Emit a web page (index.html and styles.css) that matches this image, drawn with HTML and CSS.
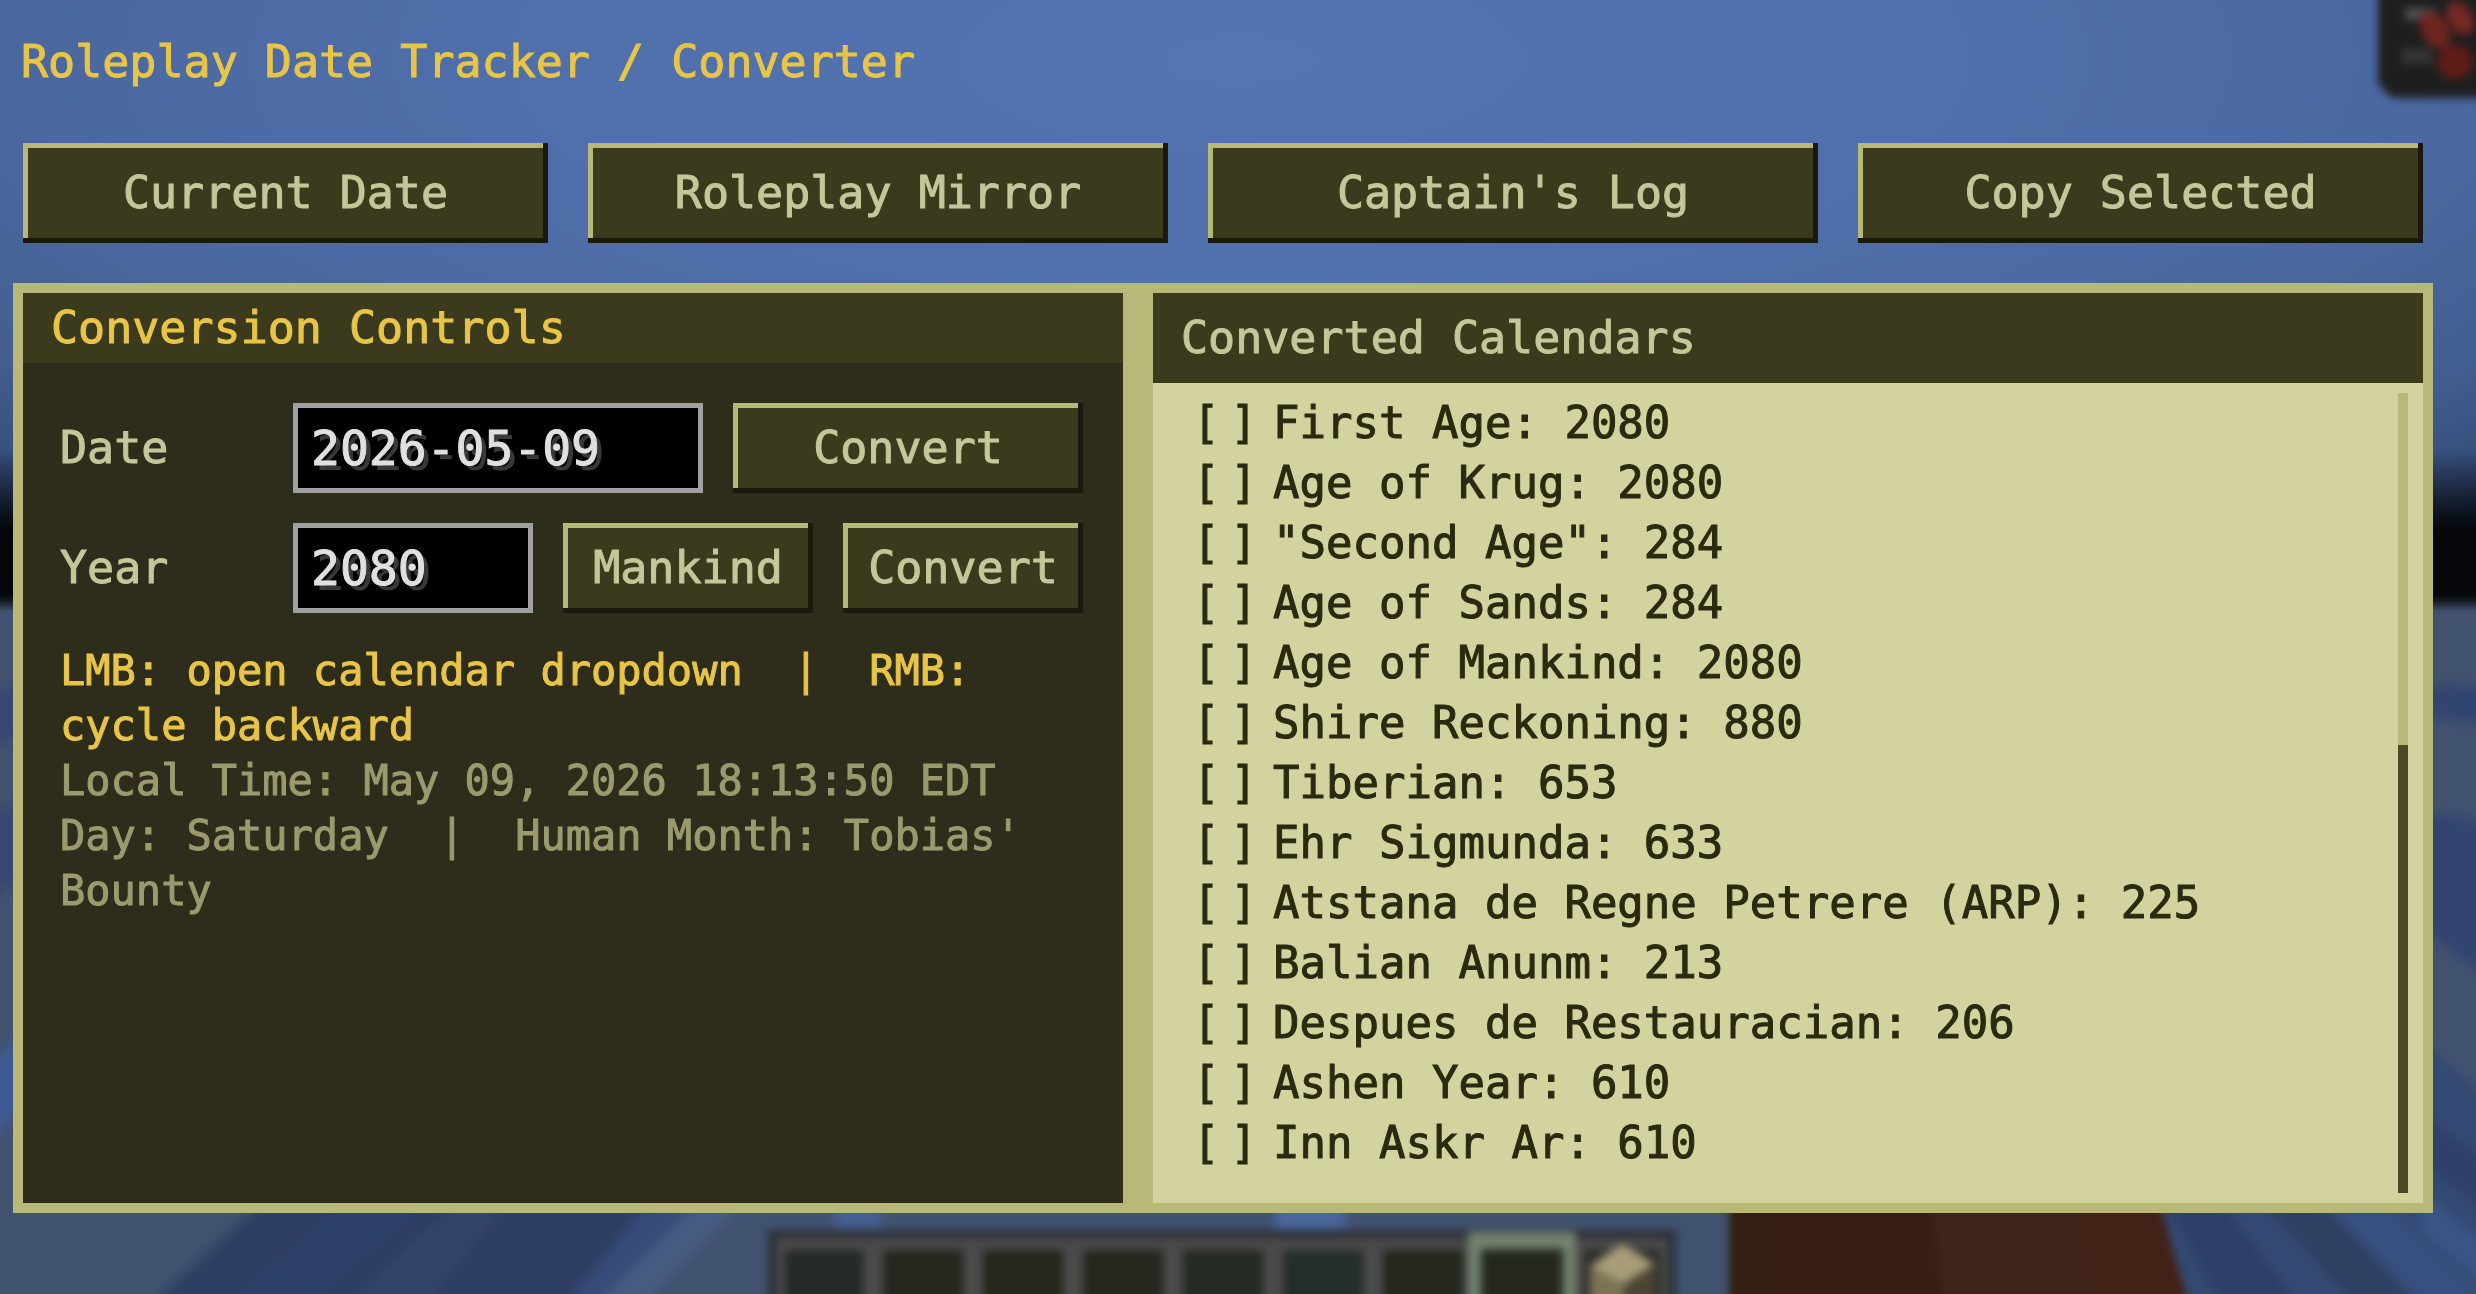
FILE: index.html
```html
<!DOCTYPE html>
<html lang="en">
<head>
    <meta charset="UTF-8">
    <meta name="viewport" content="width=device-width, initial-scale=1.0">
    <title>Roleplay Date Tracker / Converter</title>
    <link rel="stylesheet" href="styles.css">
</head>
<body>

<!-- Game world behind the screen -->
<svg class="world" viewBox="0 0 2476 1294" preserveAspectRatio="none" aria-hidden="true">
    <defs>
        <radialGradient id="sky" gradientUnits="userSpaceOnUse" cx="0" cy="0" r="1" gradientTransform="translate(1240 60) scale(1900 640)">
            <stop offset="0" stop-color="#5474b2"/>
            <stop offset="0.35" stop-color="#5070ac"/>
            <stop offset="0.65" stop-color="#4a689f"/>
            <stop offset="0.8" stop-color="#425e90"/>
            <stop offset="1" stop-color="#2c3f66"/>
        </radialGradient>
        <linearGradient id="horizon" x1="0" y1="0" x2="0" y2="1">
            <stop offset="0" stop-color="#04060a" stop-opacity="0"/>
            <stop offset="0.3" stop-color="#04060a" stop-opacity="0.6"/>
            <stop offset="0.5" stop-color="#04060a"/>
            <stop offset="1" stop-color="#04060a"/>
        </linearGradient>
        <filter id="soft" x="-10%" y="-10%" width="120%" height="120%" color-interpolation-filters="sRGB">
            <feGaussianBlur stdDeviation="6"/>
        </filter>
        <filter id="softer" x="-10%" y="-10%" width="120%" height="120%" color-interpolation-filters="sRGB">
            <feGaussianBlur stdDeviation="4"/>
        </filter>
    </defs>

    <rect width="2476" height="620" fill="url(#sky)"/>
    <rect y="450" width="2476" height="160" fill="url(#horizon)"/>

    <!-- Floor -->
    <g filter="url(#soft)">
        <rect x="-40" y="604" width="2556" height="760" fill="#41526f"/>
        <polygon points="-40,700 40,680 40,730 -40,760" fill="#364871"/>
        <polygon points="-40,830 40,790 40,860 -40,930" fill="#364871"/>
        <polygon points="-40,1100 60,990 60,1060 -40,1180" fill="#3d5a94"/>
        <polygon points="265,1200 700,1200 575,1310 145,1310" fill="#2e3e62"/>
        <polygon points="350,1200 430,1200 300,1310 220,1310" fill="#2d4069"/>
        <polygon points="460,1200 510,1200 420,1310 340,1310" fill="#33456a"/>
        <polygon points="650,1200 700,1200 590,1310 560,1310" fill="#364b7a"/>
        <polygon points="700,1200 745,1200 640,1310 590,1310" fill="#465b80"/>
        <rect x="835" y="1190" width="46" height="50" fill="#465f90"/>
        <rect x="1275" y="1190" width="70" height="50" fill="#4a669c"/>
        <polygon points="2380,680 2520,690 2520,730 2380,710" fill="#324570"/>
        <polygon points="2380,800 2520,830 2520,1000 2380,900" fill="#324570"/>
        <polygon points="2150,1190 2380,1000 2520,1130 2520,1320 2180,1320" fill="#344973"/>
        <polygon points="2165,1200 2220,1200 2310,1320 2230,1320" fill="#2d3f68"/>
        <polygon points="2260,1200 2320,1200 2430,1320 2370,1320" fill="#2e4062"/>
        <polygon points="2320,1200 2380,1200 2510,1320 2440,1320" fill="#38507f"/>
        <polygon points="2420,1110 2520,1190 2520,1240 2420,1160" fill="#2f4168"/>
        <polygon points="2420,1190 2520,1270 2520,1320 2420,1230" fill="#3a5486"/>
    </g>
    <g filter="url(#softer)">
        <polygon points="1729,1190 2156,1190 2190,1310 1729,1310" fill="#40241a"/>
        <rect x="1729" y="1190" width="50" height="120" fill="#352013"/>
        <polygon points="1775,1190 1930,1190 1945,1310 1775,1310" fill="#391e14"/>
        <polygon points="2080,1190 2156,1190 2190,1310 2100,1310" fill="#422217"/>
    </g>

    <!-- Hotbar -->
    <g filter="url(#softer)">
        <rect x="768" y="1230" width="908" height="90" fill="#2c3036"/>
        <rect x="776" y="1238" width="892" height="80" fill="#4a4a4a"/>
        <rect x="785" y="1250" width="78" height="60" fill="#242a26"/>
        <rect x="883" y="1250" width="80" height="60" fill="#24281f"/>
        <rect x="983" y="1250" width="80" height="60" fill="#24281f"/>
        <rect x="1083" y="1250" width="80" height="60" fill="#24281f"/>
        <rect x="1183" y="1250" width="80" height="60" fill="#252a22"/>
        <rect x="1283" y="1250" width="80" height="60" fill="#262e2c"/>
        <rect x="1383" y="1250" width="80" height="60" fill="#24281f"/>
        <rect x="1584" y="1250" width="76" height="60" fill="#2c2d28"/>
        <rect x="1468" y="1232" width="108" height="90" fill="#74826f"/>
        <rect x="1481" y="1249" width="82" height="70" fill="#24281f"/>
        <polygon points="1622,1244 1655,1264 1624,1284 1590,1266" fill="#a89d78"/>
        <polygon points="1590,1266 1624,1284 1624,1310 1590,1310" fill="#7d7458"/>
        <polygon points="1655,1264 1655,1310 1624,1310 1624,1284" fill="#4b4634"/>
    </g>

    <!-- Effect icon in the corner -->
    <g filter="url(#softer)">
        <path d="M2378-20H2500V98H2392L2378 84Z" fill="#1e1e1f"/>
        <rect x="2405" y="8" width="30" height="12" fill="#505050"/>
        <rect x="2402" y="48" width="30" height="16" fill="#343434"/>
        <ellipse cx="2435" cy="30" rx="13" ry="20" transform="rotate(-30 2435 30)" fill="#70251f"/>
        <ellipse cx="2460" cy="18" rx="12" ry="18" transform="rotate(-30 2460 18)" fill="#762823"/>
        <ellipse cx="2455" cy="62" rx="18" ry="17" fill="#5f1c18"/>
    </g>
</svg>

<main class="tracker">
    <h1 class="title">Roleplay Date Tracker / Converter</h1>

    <!-- Top Buttons -->
    <div class="toolbar">
        <button type="button" class="btn current">Current Date</button>
        <button type="button" class="btn mirror">Roleplay Mirror</button>
        <button type="button" class="btn log">Captain's Log</button>
        <button type="button" class="btn copy">Copy Selected</button>
    </div>

    <div class="panels">
        <!-- Conversion Controls -->
        <section class="controls">
            <h2 class="controls-title">Conversion Controls</h2>
            <form class="controls-body">
                <div class="field-row date-row">
                    <label for="dateInput">Date</label>
                    <input type="text" id="dateInput" value="2026-05-09">
                    <button type="button" class="btn">Convert</button>
                </div>
                <div class="field-row year-row">
                    <label for="yearInput">Year</label>
                    <input type="text" id="yearInput" value="2080">
                    <select class="btn era" aria-label="Calendar">
                        <option>Mankind</option>
                    </select>
                    <button type="button" class="btn">Convert</button>
                </div>
                <div class="notes">
                    <p class="hint">LMB: open calendar dropdown&nbsp; |&nbsp; RMB: cycle backward</p>
                    <p>Local Time: May 09, 2026 18:13:50 EDT</p>
                    <p>Day: Saturday&nbsp; |&nbsp; Human Month: Tobias' Bounty</p>
                </div>
            </form>
        </section>

        <!-- Converted Calendars -->
        <section class="calendars">
            <h2 class="calendars-title">Converted Calendars</h2>
            <div class="calendars-body">
                <ul class="calendar-list">
                    <li><label><input type="checkbox"><span class="box"><span>[</span> <span>]</span></span> First Age: 2080</label></li>
                    <li><label><input type="checkbox"><span class="box"><span>[</span> <span>]</span></span> Age of Krug: 2080</label></li>
                    <li><label><input type="checkbox"><span class="box"><span>[</span> <span>]</span></span> "Second Age": 284</label></li>
                    <li><label><input type="checkbox"><span class="box"><span>[</span> <span>]</span></span> Age of Sands: 284</label></li>
                    <li><label><input type="checkbox"><span class="box"><span>[</span> <span>]</span></span> Age of Mankind: 2080</label></li>
                    <li><label><input type="checkbox"><span class="box"><span>[</span> <span>]</span></span> Shire Reckoning: 880</label></li>
                    <li><label><input type="checkbox"><span class="box"><span>[</span> <span>]</span></span> Tiberian: 653</label></li>
                    <li><label><input type="checkbox"><span class="box"><span>[</span> <span>]</span></span> Ehr Sigmunda: 633</label></li>
                    <li><label><input type="checkbox"><span class="box"><span>[</span> <span>]</span></span> Atstana de Regne Petrere (ARP): 225</label></li>
                    <li><label><input type="checkbox"><span class="box"><span>[</span> <span>]</span></span> Balian Anunm: 213</label></li>
                    <li><label><input type="checkbox"><span class="box"><span>[</span> <span>]</span></span> Despues de Restauracian: 206</label></li>
                    <li><label><input type="checkbox"><span class="box"><span>[</span> <span>]</span></span> Ashen Year: 610</label></li>
                    <li><label><input type="checkbox"><span class="box"><span>[</span> <span>]</span></span> Inn Askr Ar: 610</label></li>
                </ul>
                <div class="scroll-track"><div class="scroll-thumb"></div></div>
            </div>
        </section>
    </div>
</main>

</body>
</html>
```

FILE: styles.css
```css
* {
    box-sizing: border-box;
}
body {
    margin: 0;
    min-height: 100vh;
    background-color: #41526f;
    font-family: "DejaVu Sans Mono", monospace;
    font-size: 45px;
    line-height: 60px;
    color: #c6c69b;
    -webkit-text-stroke: 1px;
}
h1, h2, p, ul {
    margin: 0;
    padding: 0;
    font-size: inherit;
    font-weight: normal;
}
button, input, select {
    font: inherit;
    color: inherit;
    margin: 0;
}
.world {
    position: fixed;
    z-index: -1;
    left: 0;
    top: 0;
    width: 100%;
    height: 100%;
}
.tracker {
    padding: 32px 43px 80px 13px;
}
.title {
    padding-left: 8px;
    color: #e8c547;
}

/* Buttons */
.btn {
    height: 90px;
    min-width: 0;
    padding: 0;
    background-color: #3c3a1d;
    border: none;
    border-radius: 0;
    box-shadow: inset -5px 0 #1a190b, inset 0 -5px #1a190b, inset 5px 0 #b8b878, inset 0 5px #b8b878;
    text-align: center;
    cursor: pointer;
}
.btn:hover {
    background-color: #4a4726;
}
.toolbar {
    display: flex;
    gap: 40px;
    margin: 51px 10px 40px;
}
.toolbar .btn {
    height: 100px;
}
.current {
    flex: 525 1 0;
}
.mirror {
    flex: 580 1 0;
}
.log {
    flex: 610 1 0;
}
.copy {
    flex: 565 1 0;
}

/* Panels */
.panels {
    display: grid;
    grid-template-columns: minmax(0, 110fr) minmax(0, 127fr);
    gap: 30px;
    padding: 10px;
    background-color: #b8b878;
}
.controls {
    background-color: #2e2c1a;
}
.controls-title, .calendars-title {
    padding: 5px 28px;
    background-color: #3c3a1d;
}
.controls-title {
    color: #e8c547;
}
.calendars-title {
    padding: 15px 28px;
}
.controls-body {
    padding: 40px 40px 40px 37px;
}
.field-row {
    display: grid;
    align-items: center;
    gap: 30px;
    margin-bottom: 30px;
}
.date-row {
    grid-template-columns: 203px minmax(0, 41fr) minmax(0, 35fr);
}
.year-row {
    grid-template-columns: 203px minmax(0, 24fr) minmax(0, 25fr) minmax(0, 24fr);
}
.field-row input {
    width: 100%;
    height: 90px;
    padding: 0 13px;
    background-color: #000;
    border: 5px solid #a0a0a0;
    font-size: 48px;
    color: #e0e0e0;
    text-shadow: 5px 5px #383838;
}
.era {
    appearance: none;
    text-align-last: center;
}
.notes {
    font-size: 42px;
    line-height: 55px;
    color: #9a9a6e;
}
.hint {
    color: #e8c547;
}

/* Calendar list */
.calendars {
    background-color: #d3d3a0;
    color: #2a2a10;
}
.calendars-title {
    color: #c6c69b;
}
.calendars-body {
    display: flex;
    padding: 10px 15px 10px 40px;
}
.calendar-list {
    flex: 1;
    padding-bottom: 20px;
    list-style: none;
    font-size: 44px;
}
.calendar-list label {
    display: flex;
    position: relative;
    cursor: pointer;
}
.calendar-list input {
    position: absolute;
    left: 0;
    top: 0;
    width: 60px;
    height: 60px;
    opacity: 0;
}
.box {
    display: flex;
    flex-shrink: 0;
    justify-content: space-between;
    width: 64px;
    margin-right: 16px;
}
.scroll-track {
    display: flex;
    flex-direction: column;
    justify-content: flex-end;
    width: 10px;
    background-color: #b8b878;
}
.scroll-thumb {
    height: 56%;
    background-color: #4a4a28;
}
```
